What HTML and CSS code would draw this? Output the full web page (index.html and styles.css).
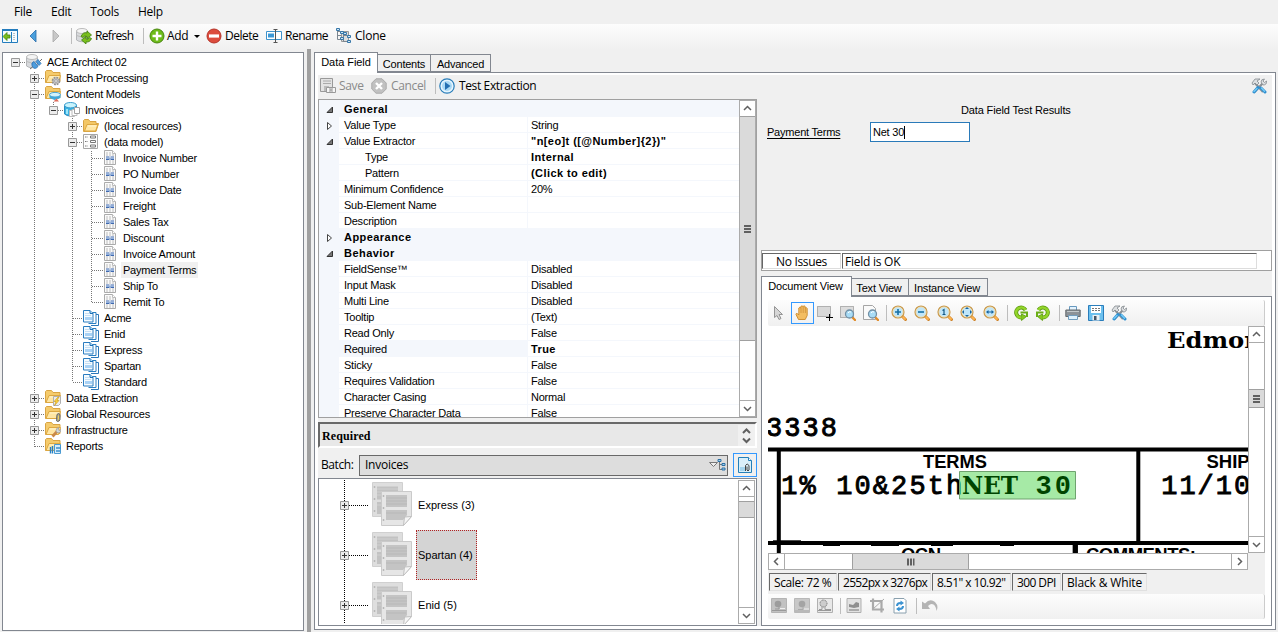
FILE: index.html
```html
<!DOCTYPE html>
<html lang="en">
<head>
<meta charset="utf-8">
<title>ACE Architect</title>
<link rel="stylesheet" href="styles.css">
</head>
<body>
<svg class="sprite" aria-hidden="true">
  <symbol id="plus" viewBox="0 0 9 9"><path d="M.5.5h8v8h-8z" fill="#ececec" stroke="#999"/><path d="M2 4.500h5M4.500 2v5" stroke="#333"/></symbol>
  <symbol id="minus" viewBox="0 0 9 9"><path d="M.5.5h8v8h-8z" fill="#ececec" stroke="#999"/><path d="M2 4.500h5" stroke="#333"/></symbol>
  <symbol id="folder" viewBox="0 0 16 16"><path d="M.5 13.500v-11l1-1h4l1.500 2h6v2h2.500l-2.500 8z" fill="#f3c766" stroke="#d9a443"/><path d="M1.500 13l2.500-6.500h11l-2.500 6.500z" fill="#ffe6a3" stroke="#dda841"/><path d="M5 8h8" stroke="#fff4cf"/></symbol>
  <symbol id="fback" viewBox="0 0 16 16"><path d="M.5 12.500v-11l1-1h5l1.500 2h7v9z" fill="#f5cb6c" stroke="#d9a443"/><path d="M1 12.500l3-7h11.500l-2 7z" fill="#ffe6a3" stroke="#dda841"/><path d="M5 7h9" stroke="#fff4cf"/></symbol>
  <symbol id="fgear" viewBox="0 0 16 16"><use href="#fback"/><circle cx="11" cy="11" r="3.200" fill="#c9c9c9" stroke="#8f8f8f" stroke-width="2.200" stroke-dasharray="1.700 .8"/><circle cx="11" cy="11" r="2.700" fill="#c4c4c4"/><circle cx="11" cy="11" r="1.300" fill="#fff" stroke="#888" stroke-width=".7"/></symbol>
  <symbol id="fcyl" viewBox="0 0 16 16"><use href="#fback"/><path d="M4.500 9v3l5 2 6-2V9z" fill="#3fa9dc"/><ellipse cx="10" cy="8.700" rx="5.500" ry="2.300" fill="#d3f2fc" stroke="#4aa5d4"/><path d="M8.500 15.500l3-3 2.500 3z" fill="#df6b5b"/></symbol>
  <symbol id="fbolt" viewBox="0 0 16 16"><use href="#fback"/><path d="M8.500 6.500h7v7l-2 2h-5z" fill="#ececec" stroke="#b0b0b0"/><path d="M13 7l-4 4.500h2l-1.500 4 4.500-5h-2l2-3.500z" fill="#ffd83b" stroke="#c99517" stroke-width=".6"/></symbol>
  <symbol id="fclip" viewBox="0 0 16 16"><use href="#fback"/><path d="M12 8.500q1.500-2 3 0v5q-.3 2-2.500 2-1.500-.5-1-2z" fill="#a8a38c" stroke="#666"/><path d="M13.400 9.500v4" stroke="#f7d65d"/></symbol>
  <symbol id="fwrench" viewBox="0 0 16 16"><use href="#fback"/><path d="M7.500 14.500l4.500-5" stroke="#c9894a" stroke-width="2.800"/><path d="M11 9q0-3.500 3-3.500l-1 2 1.500 1 1.500-1q0 4-4 3z" fill="#d4d8da" stroke="#999" stroke-width=".7"/></symbol>
  <symbol id="freport" viewBox="0 0 16 16"><use href="#fback"/><path d="M9.500 6.500h6v9h-6z" fill="#d6ecfa" stroke="#4a9ad2"/><path d="M5.500 9v6.500M7.500 8v7.500" stroke="#2780c3" stroke-width="1.400"/><path d="M11 10h5M11 13h4" stroke="#3c8fcb" stroke-width="1.300"/></symbol>
  <symbol id="db" viewBox="0 0 16 16"><path d="M.5 3v9q5 3.500 11 0V3z" fill="#d8dadd" stroke="#b4b6b9"/><ellipse cx="6" cy="3" rx="5.500" ry="2.500" fill="#f4f4f4" stroke="#bcbcbc"/><path d="M.5 7.500q5 3 11 0" fill="none" stroke="#bbb"/></symbol>
  <symbol id="dblink" viewBox="0 0 16 16"><use href="#db"/><path d="M6 11.500q-1-3 2-4l4 5q-3 3.500-5.500.5zM10 7.500l2-2 3 4-2 2z" fill="#4e9ddd" stroke="#2a70b4" stroke-width=".8"/><path d="M4 15l2.500-2M14 7l2-2" stroke="#6c6c6c"/></symbol>
  <symbol id="dbblue" viewBox="0 0 16 16"><path d="M.5 3v9q5 4 12 0V3z" fill="#3ab2e2" stroke="#2a8bc0"/><ellipse cx="6.500" cy="3.200" rx="6" ry="2.700" fill="#c8f3fc" stroke="#3a9dce"/><path d="M3 7v5" stroke="#9be6fa" stroke-width="2"/><path d="M5.500 8.500h5v6h-5z" fill="#fff" stroke="#bbb"/><path d="M8 7.500h5v6h-5z" fill="#fff" stroke="#bbb"/><path d="M10.500 5.500h5v6h-5z" fill="#fff" stroke="#a2a2a2"/></symbol>
  <symbol id="model" viewBox="0 0 16 16"><path d="M.5.5h14v14H.5z" fill="#fdfdfd" stroke="#a6a6a6"/><path d="M2 3h3M2 7.500h3M2 12h3" stroke="#777" stroke-dasharray="1 .5"/><path d="M7.500 2h5v2h-5zM7.500 6.500h5v2h-5zM7.500 11h5v2h-5z" fill="#fff" stroke="#777"/></symbol>
  <symbol id="field" viewBox="0 0 16 16"><path d="M2.500.5h8l3 3v11h-11z" fill="#fafafa" stroke="#ababab"/><path d="M10.500.5v3h3" fill="#fff" stroke="#bbb"/><path d="M4 3h5M4 5h8M4 11h8M4 13h8" stroke="#bcbcbc" stroke-dasharray="2 1"/><path d="M4 7h8M4 9.500h8" stroke="#3f69b0" stroke-dasharray="3.500 1"/><path d="M4 8.300h8" stroke="#7b9fd4"/></symbol>
  <symbol id="pages" viewBox="0 0 16 16"><path d="M10 4.500h5.500v11H8" fill="#fff" stroke="#2a76b8"/><path d="M8 2.500h5v11H5.500" fill="#fff" stroke="#2a7fc2"/><path d="M.5.500h6.500l3 3v8.500H.5z" fill="#f5fbff" stroke="#2a7cc0"/><path d="M7 .5v3h3" fill="#b6dcf5" stroke="#1b70b8"/><path d="M2 3.500h4M2 5.500h6" stroke="#c5def3"/><path d="M2 8.500h7" stroke="#a9d2f5" stroke-width="3"/></symbol>
  <symbol id="tools" viewBox="0 0 16 16"><path d="M3 4l9 10" stroke="#8b9196" stroke-width="2.200"/><path d="M12 5L3.500 14" stroke="#8b9196" stroke-width="2.200"/><path d="M1 5l3-4h5L6 3l2 2-2 2-2-2-2 2zM10 4q0-3 3.500-3L12 3l1.500 1.500L15.500 3q.5 4-3.500 4z" fill="#dcdfe1" stroke="#83898e" stroke-width=".8"/><path d="M7 9.500L3 14M10 10l4 4" stroke="#2f8fd0" stroke-width="3" stroke-linecap="round"/><path d="M6 10.500l-3 3M10.500 10l3 3.300" stroke="#77cdf7" stroke-width="1.300" stroke-linecap="round"/></symbol>
  <symbol id="mag" viewBox="0 0 16 16"><path d="M11 11l3.500 3.500" stroke="#cf842b" stroke-width="3" stroke-linecap="round"/><path d="M12 12l2 2" stroke="#ffb44e" stroke-width="1.800" stroke-linecap="round"/><circle cx="7" cy="7" r="5.900" fill="#d5f0fd" stroke="#c99a4e" stroke-width="1.400"/><circle cx="7" cy="7" r="5" fill="#bfe6fa" stroke="#f2dba8" stroke-width=".8"/></symbol>
  <symbol id="smag" viewBox="0 0 16 16"><path d="M12 12l3 3" stroke="#e08b29" stroke-width="2.400" stroke-linecap="round"/><circle cx="9.500" cy="9" r="4" fill="#a8dcf6" stroke="#728fa4" stroke-width="1.300"/><path d="M8 8q1-2 3-1" fill="none" stroke="#fff"/></symbol>
  <symbol id="rot" viewBox="0 0 16 16"><path d="M12.500 5A5 5 0 1 0 8.500 12.500" fill="none" stroke="#5c9a10" stroke-width="4"/><path d="M8.500 9v6.500l5-4z" fill="#83c81d" stroke="#5c9a10" stroke-width=".8"/><path d="M12.500 5A5 5 0 1 0 8.500 12.500" fill="none" stroke="#93d52b" stroke-width="2.400"/><path d="M7.500 7.500h6.500v4.500" fill="none" stroke="#6cae17" stroke-width="2"/></symbol>
  <symbol id="clone" viewBox="0 0 16 16"><path d="M5.500 3.500h7v10h-7z" fill="#ddd" stroke="#999"/><path d="M1.500 1v10.500H5M1.500 3.500H5M1.500 7.500H5M7.500 5v8.500h4M7.500 7.500h4" fill="none" stroke="#7c8790"/><path d="M.5.500h3v2h-3zM4.500 3.500h3v2h-3zM4.500 9.500h3v2h-3zM7.500 4.500h3v2h-3zM11.500 7.500h3v2h-3zM11.500 12.500h3v2h-3z" fill="#cfe7f7" stroke="#3777a8"/></symbol>
  <symbol id="stack" viewBox="0 0 40 44"><path d="M.5.500h30v34H.5z" fill="#dedede" stroke="#d0d0d0"/><path d="M5 4.500h21v13H5zM5 20h21v12H5z" fill="#c2c2c2"/><path d="M5 7h21M5 10h21M5 13h21M5 23h21" stroke="#d0d0d0"/><path d="M9.500 9.500h30v25l-8 9h-22z" fill="#e6e6e6" stroke="#cacaca"/><path d="M14 13h21v12H14zM14 28h21v5l-4 5H14z" fill="#c4c4c4"/><path d="M14 16h21M14 19h21M14 22h21M14 31h20" stroke="#b8b8b8"/><path d="M31.500 43.500l1-8.500 7-.5z" fill="#f5f5f5" stroke="#c0c0c0"/><path d="M2.500 4v2M2.500 16v2M2.500 28v2M11.500 13v2M11.500 25v2M11.500 37v2" stroke="#b8b8b8" stroke-width="1.500"/></symbol>
  <symbol id="up" viewBox="0 0 15 15"><path d="M4 9l3.500-3.500L11 9" fill="none" stroke="#606060" stroke-width="1.500"/></symbol>
  <symbol id="down" viewBox="0 0 15 15"><path d="M4 6l3.500 3.500L11 6" fill="none" stroke="#606060" stroke-width="1.500"/></symbol>
  <symbol id="open" viewBox="0 0 8 8"><path d="M6.500 1v5.500H1z" fill="#777" stroke="#333"/></symbol>
  <symbol id="closed" viewBox="0 0 8 8"><path d="M1.500.5v7l4-3.500z" fill="#fff" stroke="#444"/></symbol>
</svg>

<nav class="menubar"><span>File</span><span>Edit</span><span>Tools</span><span>Help</span></nav>
<div class="toolbar">
  <svg class="i nav" viewBox="0 0 16 16"><path d="M.5 1.500h15v13H.5z" fill="#f3fbff" stroke="#237cbd"/><path d="M0 2h16" stroke="#237cbd" stroke-width="2"/><path d="M9.500 4v10" stroke="#237cbd"/><path d="M12 5v8" stroke="#888" stroke-dasharray="1 1"/><path d="M1 8.500l4-4v2.500h3v3H5v2.500z" fill="#77bd1d" stroke="#45850b" stroke-width=".8"/></svg>
  <svg class="i back" viewBox="0 0 16 16"><path d="M11 2v12L5 8z" fill="#4ba0dd" stroke="#296ca8" stroke-width=".8"/></svg>
  <svg class="i fwd" viewBox="0 0 16 16"><path d="M5 2v12l6-6z" fill="#c8c8c8" stroke="#a8a8a8" stroke-width=".8"/></svg>
  <i class="sep s1"></i>
  <svg class="i ref" viewBox="0 0 16 16"><use href="#db"/><path d="M5 8.500q2-5 6-3.500V3l4.500 4L11 10.500V8.500Q8.500 7 7 9.500zM15.500 10.500q-1.500 4-5.500 3.500V16l-4.500-4L10 8.500v2.500q2 1 3.500-1.500z" fill="#79bf1d" stroke="#3f7c0b" stroke-width=".8"/></svg>
  <span class="t-refresh">Refresh</span>
  <i class="sep s2"></i>
  <svg class="i add" viewBox="0 0 16 16"><circle cx="8" cy="8" r="7" fill="#6dbb19" stroke="#48860f"/><path d="M8 3.500v9M3.500 8h9" stroke="#fff" stroke-width="2.400"/></svg>
  <span class="t-add">Add</span><i class="drop"></i>
  <svg class="i del" viewBox="0 0 16 16"><circle cx="8" cy="8" r="7" fill="#dc4c3d" stroke="#b53328"/><path d="M3 8h10" stroke="#fff" stroke-width="3.200"/></svg>
  <span class="t-delete">Delete</span>
  <svg class="i ren" viewBox="0 0 16 16"><path d="M.5 3.500h15v8H.5z" fill="#fff" stroke="#3f93cc"/><path d="M2 5.500h6v4H2z" fill="#3c98d6"/><path d="M7.500 1.500h4M7.500 14.500h4M9.500 1.500v13" stroke="#555"/></svg>
  <span class="t-rename">Rename</span>
  <svg class="i cln"><use href="#clone"/></svg>
  <span class="t-clone">Clone</span>
</div>

<main class="work">
  <section class="tree">
    <svg class="lines" viewBox="0 0 200 400"><path d="M12.500 9.500h10M31.500 19v375M31.500 25.500h11M31.500 41.500h11M50.500 49v9M50.500 57.500h11M69.500 65v264M69.500 73.500h11M69.500 89.500h11M88.500 98v152M88.500 105.500h11M88.500 121.500h11M88.500 137.500h11M88.500 153.500h11M88.500 169.500h11M88.500 185.500h11M88.500 201.500h11M88.500 217.500h11M88.500 233.500h11M88.500 249.500h11M69.500 265.500h11M69.500 281.500h11M69.500 297.500h11M69.500 313.500h11M69.500 329.500h11M31.500 345.500h11M31.500 361.500h11M31.500 377.500h11M31.500 393.500h11"/></svg>
    <div class="node l0"><svg class="x"><use href="#minus"/></svg><svg class="i"><use href="#dblink"/></svg><span>ACE Architect 02</span></div>
    <div class="node l1"><svg class="x"><use href="#plus"/></svg><svg class="i"><use href="#fgear"/></svg><span>Batch Processing</span></div>
    <div class="node l1"><svg class="x"><use href="#minus"/></svg><svg class="i"><use href="#fcyl"/></svg><span>Content Models</span></div>
    <div class="node l2"><svg class="x"><use href="#minus"/></svg><svg class="i"><use href="#dbblue"/></svg><span>Invoices</span></div>
    <div class="node l3"><svg class="x"><use href="#plus"/></svg><svg class="i"><use href="#folder"/></svg><span>(local resources)</span></div>
    <div class="node l3"><svg class="x"><use href="#minus"/></svg><svg class="i"><use href="#model"/></svg><span>(data model)</span></div>
    <div class="node l4"><i class="x"></i><svg class="i"><use href="#field"/></svg><span>Invoice Number</span></div>
    <div class="node l4"><i class="x"></i><svg class="i"><use href="#field"/></svg><span>PO Number</span></div>
    <div class="node l4"><i class="x"></i><svg class="i"><use href="#field"/></svg><span>Invoice Date</span></div>
    <div class="node l4"><i class="x"></i><svg class="i"><use href="#field"/></svg><span>Freight</span></div>
    <div class="node l4"><i class="x"></i><svg class="i"><use href="#field"/></svg><span>Sales Tax</span></div>
    <div class="node l4"><i class="x"></i><svg class="i"><use href="#field"/></svg><span>Discount</span></div>
    <div class="node l4"><i class="x"></i><svg class="i"><use href="#field"/></svg><span>Invoice Amount</span></div>
    <div class="node l4"><i class="x"></i><svg class="i"><use href="#field"/></svg><span class="sel">Payment Terms</span></div>
    <div class="node l4"><i class="x"></i><svg class="i"><use href="#field"/></svg><span>Ship To</span></div>
    <div class="node l4"><i class="x"></i><svg class="i"><use href="#field"/></svg><span>Remit To</span></div>
    <div class="node l3"><i class="x"></i><svg class="i"><use href="#pages"/></svg><span>Acme</span></div>
    <div class="node l3"><i class="x"></i><svg class="i"><use href="#pages"/></svg><span>Enid</span></div>
    <div class="node l3"><i class="x"></i><svg class="i"><use href="#pages"/></svg><span>Express</span></div>
    <div class="node l3"><i class="x"></i><svg class="i"><use href="#pages"/></svg><span>Spartan</span></div>
    <div class="node l3"><i class="x"></i><svg class="i"><use href="#pages"/></svg><span>Standard</span></div>
    <div class="node l1"><svg class="x"><use href="#plus"/></svg><svg class="i"><use href="#fbolt"/></svg><span>Data Extraction</span></div>
    <div class="node l1"><svg class="x"><use href="#plus"/></svg><svg class="i"><use href="#fclip"/></svg><span>Global Resources</span></div>
    <div class="node l1"><svg class="x"><use href="#plus"/></svg><svg class="i"><use href="#fwrench"/></svg><span>Infrastructure</span></div>
    <div class="node l1"><i class="x"></i><svg class="i"><use href="#freport"/></svg><span>Reports</span></div>
  </section>
  <div class="splitter"></div>

  <section class="editor">
    <div class="tabs top"><span class="tab on a1">Data Field</span><span class="tab a2">Contents</span><span class="tab a3">Advanced</span></div>
    <div class="page">
      <div class="left">
        <div class="cmdbar">
          <svg class="i" viewBox="0 0 16 16"><path d="M.5.500h12v13H.5z" fill="#e3e3e3" stroke="#999"/><path d="M3 3h8M3 5.500h8" stroke="#aaa"/><path d="M4 8h5v5H4z" fill="#bbb"/><path d="M6.500 9.500h9v5h-9z" fill="#f5f5f5" stroke="#999"/><path d="M9 11h4M9 13h4M11 11v2" stroke="#999"/></svg>
          <span class="off c1">Save</span>
          <svg class="i c2" viewBox="0 0 16 16"><path d="M5 .8h6L15.200 5v6L11 15.200H5L.8 11V5z" fill="#c1c1c1" stroke="#aaa"/><path d="M5 5l6 6M11 5l-6 6" stroke="#fff" stroke-width="2.400"/></svg>
          <span class="off c3">Cancel</span>
          <i class="sep"></i>
          <svg class="i c4" viewBox="0 0 16 16"><circle cx="8" cy="8" r="7.200" fill="#e6f5fe" stroke="#287db9" stroke-width="1.200"/><circle cx="8" cy="8" r="5" fill="#abdaf5"/><path d="M6 4l5.500 4L6 12z" fill="#2470b2"/></svg>
          <span class="c5">Test Extraction</span>
        </div>
        <div class="grid">
          <div class="rows">
            <div class="row cat"><b class="g"><svg><use href="#open"/></svg></b><b>General</b></div>
            <div class="row"><b class="g"><svg><use href="#closed"/></svg></b><span class="n">Value Type</span><span class="v">String</span></div>
            <div class="row"><b class="g"><svg><use href="#open"/></svg></b><span class="n">Value Extractor</span><span class="v"><b>"n[eo]t ([@Number]{2})"</b></span></div>
            <div class="row"><b class="g"></b><span class="n sub">Type</span><span class="v"><b>Internal</b></span></div>
            <div class="row"><b class="g"></b><span class="n sub">Pattern</span><span class="v"><b>(Click to edit)</b></span></div>
            <div class="row"><b class="g"></b><span class="n">Minimum Confidence</span><span class="v">20%</span></div>
            <div class="row"><b class="g"></b><span class="n">Sub-Element Name</span><span class="v"></span></div>
            <div class="row"><b class="g"></b><span class="n">Description</span><span class="v"></span></div>
            <div class="row cat"><b class="g"><svg><use href="#closed"/></svg></b><b>Appearance</b></div>
            <div class="row cat"><b class="g"><svg><use href="#open"/></svg></b><b>Behavior</b></div>
            <div class="row"><b class="g"></b><span class="n">FieldSense™</span><span class="v">Disabled</span></div>
            <div class="row"><b class="g"></b><span class="n">Input Mask</span><span class="v">Disabled</span></div>
            <div class="row"><b class="g"></b><span class="n">Multi Line</span><span class="v">Disabled</span></div>
            <div class="row"><b class="g"></b><span class="n">Tooltip</span><span class="v">(Text)</span></div>
            <div class="row"><b class="g"></b><span class="n">Read Only</span><span class="v">False</span></div>
            <div class="row"><b class="g"></b><span class="n hot">Required</span><span class="v"><b>True</b></span></div>
            <div class="row"><b class="g"></b><span class="n">Sticky</span><span class="v">False</span></div>
            <div class="row"><b class="g"></b><span class="n">Requires Validation</span><span class="v">False</span></div>
            <div class="row"><b class="g"></b><span class="n">Character Casing</span><span class="v">Normal</span></div>
            <div class="row"><b class="g"></b><span class="n">Preserve Character Data</span><span class="v">False</span></div>
          </div>
          <div class="vbar"><svg class="btn"><use href="#up"/></svg><div class="thumb t1"><i class="grip"></i></div><div class="room"></div><svg class="btn"><use href="#down"/></svg></div>
        </div>
        <div class="help"><b>Required</b><svg viewBox="0 0 17 21"><path d="M5 8l3.500-3.500L12 8M5 13.500L8.500 17l3.500-3.500" fill="none" stroke="#606060" stroke-width="2"/></svg></div>
        <div class="batch"><span>Batch:</span>
          <div class="combo"><span>Invoices</span><svg viewBox="0 0 18 12"><path d="M1.500 3.500h8l-4 4z" fill="#eee" stroke="#777"/><path d="M11.500 2v8.500h3M11.500 5.500h3" fill="none" stroke="#777"/><path d="M10 .5h3v2h-3zM14 4.500h3v2h-3zM14 9h3v2h-3z" fill="#9fd0f0" stroke="#2d70a5"/></svg></div>
          <div class="bbtn"><svg viewBox="0 0 16 16"><path d="M1.500.5h10l3 3v12h-13z" fill="#d9effa" stroke="#247fb8"/><path d="M11.500.5v3h3" fill="#fff" stroke="#247fb8"/><path d="M3 12h6" stroke="#a4d5ef" stroke-width="4"/><path d="M8.500 14V8.500q1.500-3 3.500 0V13q-1 2-2 0V9.500" fill="none" stroke="#444"/></svg></div>
        </div>
        <div class="folders">
          <div class="list">
            <svg class="lines2" viewBox="0 0 60 146"><path d="M25.500 1v144M30 26.500h19M30 76.500h19M30 126.500h19"/></svg>
            <div class="item"><svg class="x"><use href="#plus"/></svg><svg class="stk"><use href="#stack"/></svg><span>Express (3)</span></div>
            <div class="item"><svg class="x"><use href="#plus"/></svg><svg class="stk"><use href="#stack"/></svg><span class="picked">Spartan (4)</span></div>
            <div class="item"><svg class="x"><use href="#plus"/></svg><svg class="stk"><use href="#stack"/></svg><span>Enid (5)</span></div>
          </div>
          <div class="vbar"><svg class="btn"><use href="#up"/></svg><div class="room t0"></div><div class="thumb t2"></div><div class="room"></div><svg class="btn"><use href="#down"/></svg></div>
        </div>
      </div>

      <div class="right">
        <div class="test">
          <svg class="i cfg"><use href="#tools"/></svg>
          <div class="ttl">Data Field Test Results</div>
          <div class="frow"><u>Payment Terms</u><div class="inp">Net 30<i></i></div></div>
        </div>
        <div class="issues"><span class="is1">No Issues</span><span class="is2">Field is OK</span></div>
        <div class="tabs low"><span class="tab on b1">Document View</span><span class="tab b2">Text View</span><span class="tab b3">Instance View</span></div>
        <div class="viewer">
          <div class="vtools">
            <svg class="i k1" viewBox="0 0 16 16"><path d="M4.500 1.500v11l2.500-2 2 4 2-1-2-4h3.500z" fill="#d6d6d6" stroke="#959595"/></svg>
            <div class="hand"><svg class="i" viewBox="0 0 16 16"><path d="M3.500 14.500L1 9.500q0-1.500 1.300-1l1.500 1.500V3q1-1.500 2 0V1.500q1.200-1.300 2.200 0v0q1.200-1.300 2.200 0V3q1.500-1 2 .5v7l-2 4z" fill="#f3bd61" stroke="#c98829" stroke-width=".9"/><path d="M6 3v5M8.200 2v6M10.400 3v5" stroke="#ce9138" stroke-width=".8"/></svg></div>
            <svg class="i k2" viewBox="0 0 16 16"><path d="M.5 1.500h13v10H.5z" fill="#d9d9d9" stroke="#777" stroke-dasharray="1 1"/><path d="M9 12.500h7M12.500 9v7" stroke="#000"/></svg>
            <svg class="i k3" viewBox="0 0 16 16"><path d="M.5 1.500h13v11H.5z" fill="#ddd" stroke="#777" stroke-dasharray="1 1"/><use href="#smag"/></svg>
            <svg class="i k3" viewBox="0 0 16 16"><path d="M.5.500h9l3 3v11H.5z" fill="#fafafa" stroke="#a5a5a5"/><use href="#smag"/></svg>
            <i class="sep"></i>
            <svg class="i k4" viewBox="0 0 16 16"><use href="#mag"/><path d="M4 7h6M7 4v6" stroke="#1770a5" stroke-width="1.600"/></svg>
            <svg class="i k5" viewBox="0 0 16 16"><use href="#mag"/><path d="M4 7h6" stroke="#1770a5" stroke-width="1.600"/></svg>
            <svg class="i k5" viewBox="0 0 16 16"><use href="#mag"/><path d="M5.500 5.500L7 4.500v5M5.500 9.500h3" fill="none" stroke="#155a87" stroke-width="1.200"/></svg>
            <svg class="i k5" viewBox="0 0 16 16"><use href="#mag"/><path d="M7 2l2 2H5zM7 12l2-2H5zM2 7l2-2v4zM12 7l-2-2v4z" fill="#1765a0"/></svg>
            <svg class="i k5" viewBox="0 0 16 16"><use href="#mag"/><path d="M3 7l2.500-2v4zM11 7L8.500 5v4z" fill="#1765a0"/><path d="M4 7h6" stroke="#1765a0"/></svg>
            <i class="sep s6"></i>
            <svg class="i k6"><use href="#rot"/></svg>
            <svg class="i k7 flip"><use href="#rot"/></svg>
            <i class="sep s6"></i>
            <svg class="i k8" viewBox="0 0 16 16"><path d="M4.500 1.500h7v4h-7z" fill="#e4f3fe" stroke="#6798be"/><path d="M.8 5h14.400v6.500H.8z" fill="#8c9298" stroke="#666c70"/><path d="M2 6.500h12" stroke="#c1c7ca"/><path d="M3.500 10.500h9v4h-9z" fill="#dff1fd" stroke="#709cbd"/></svg>
            <svg class="i k5" viewBox="0 0 16 16"><path d="M.5.500h15v15H.5z" fill="#6cc0ee" stroke="#2a7dbb"/><path d="M3 1h10v7H3z" fill="#fff"/><path d="M4 3.500h8M4 5.500h8" stroke="#777" stroke-dasharray="2 1"/><path d="M4.500 10h7v5.500h-7z" fill="#ecf0f2"/><path d="M6 11h2.500v4H6z" fill="#456"/></svg>
            <svg class="i k5"><use href="#tools"/></svg>
          </div>
          <div class="view">
            <svg class="doc" viewBox="768 326 480 227">
              <path d="M768 449.500h480M768 543h480M778.800 448v106M1138.300 448v97" fill="none" stroke="#000" stroke-width="4"/>
              <path d="M1075.300 544v9" stroke="#000" stroke-width="5.300"/>
              <path d="M773 540.800h28M823 545.500h17M871 545.500h28M931 545.500h22M1000 545.500h14" stroke="#000"/>
              <g class="mono"><text x="766" y="436" textLength="71">3338</text><text x="781.200" y="494" textLength="181">1% 10&amp;25th</text><text class="hv" x="1035.500" y="494" textLength="35.500">30</text><text x="1161.200" y="494" textLength="89">11/10</text></g>
              <g class="slab"><text x="1167" y="348" textLength="90" lengthAdjust="spacingAndGlyphs">Edmor</text><text class="big" x="962" y="494" textLength="56" lengthAdjust="spacingAndGlyphs">NET</text></g>
              <g class="head"><text x="923" y="468" textLength="64" lengthAdjust="spacingAndGlyphs">TERMS</text><text x="1206.500" y="468">SHIP</text><text x="901" y="561" textLength="40">OCN</text><text x="1086" y="561" textLength="110">COMMENTS:</text></g>
              <path d="M959.500 471.500h116v27.500h-116z" fill="#00c400" fill-opacity=".35" stroke="#6fa36f"/>
            </svg>
            <div class="vbar"><svg class="btn"><use href="#up"/></svg><div class="room t3"></div><div class="thumb t4"><i class="grip"></i></div><div class="room"></div><svg class="btn"><use href="#down"/></svg></div>
          </div>
          <div class="hwrap"><div class="hbar"><svg class="btn rl"><use href="#up"/></svg><div class="room h1"></div><div class="thumb h2"><i class="grip"></i></div><div class="room"></div><svg class="btn rr"><use href="#up"/></svg></div></div>
          <div class="stat"><span class="z1">Scale: 72 %</span><span class="z2">2552px x 3276px</span><span class="z3">8.51" x 10.92"</span><span class="z4">300 DPI</span><span class="z5">Black &amp; White</span></div>
          <div class="vtools bot">
            <svg class="i q1" viewBox="0 0 16 16"><path d="M.5.500h15v14H.5z" fill="#c2c2c2" stroke="#b4b4b4"/><circle cx="7" cy="6" r="3.300" fill="#9c9c9c"/><path d="M4 11h4v-2M1 12.500h14" stroke="#999" fill="none"/><path d="M9 10.500h5" stroke="#f0f0f0"/></svg>
            <svg class="i q2" viewBox="0 0 16 16"><path d="M.5.500h15v14H.5z" fill="#c8c8c8" stroke="#b8b8b8"/><circle cx="8" cy="6" r="3.300" fill="#a4a4a4"/><path d="M4 11.500h5v-3M1 13h14" stroke="#aaa" fill="none"/><path d="M10 11h5" stroke="#f0f0f0"/></svg>
            <svg class="i q2" viewBox="0 0 16 16"><path d="M.5.500h15v14H.5z" fill="#e8e8e8" stroke="#b0b0b0"/><circle cx="6.500" cy="5.500" r="3.500" fill="#ccc" stroke="#777" stroke-dasharray="1 .6"/><path d="M5 8.500v3H2M8 8.500v3h6M1 12.500h13" stroke="#999" fill="none"/></svg>
            <i class="sep"></i>
            <svg class="i q3" viewBox="0 0 16 16"><path d="M1 .5h14v14H1z" fill="#e2e2e2" stroke="#b0b0b0"/><path d="M3 6l4 1 3-3 3 1v4L8 10 3 9z" fill="#8f8f8f"/><path d="M3 12h10" stroke="#999" stroke-width="1.500"/></svg>
            <svg class="i q2" viewBox="0 0 16 16"><path d="M4 .5v11h11M1 3h11.500v11.500" fill="none" stroke="#aaa" stroke-width="2.200"/><path d="M4 11L15 1" stroke="#aaa"/></svg>
            <svg class="i q2" viewBox="0 0 16 16"><path d="M2 .5h10l2 2v12.500H2z" fill="#fff" stroke="#8aa0ae"/><path d="M4 8q0-4 4.500-4V2.500L12 5 8.500 7.500V6Q6 6 6 8zM12 8q0 4-4.500 4v1.500L4 11l3.500-2.500V10Q10 10 10 8z" fill="#3b93d2"/></svg>
            <i class="sep q4"></i>
            <svg class="i q5" viewBox="0 0 16 16"><path d="M0 3.500L3 5.500Q8 0 13 4q4 4 1.500 9-.5-5-3-6.500T6 8l2 3H0z" fill="#b4b4b4"/></svg>
          </div>
        </div>
      </div>
    </div>
  </section>
</main>
</body>
</html>
```
FILE: styles.css
```css
* { box-sizing: border-box; }
body { margin: 0; width: 1278px; height: 632px; overflow: hidden; background: #f0f0f0; color: #000; display: flex; flex-direction: column; font: 11px/16px "Liberation Sans", Arial, sans-serif; letter-spacing: -.22px; }
svg { display: block; flex: none; }
span, u { white-space: pre; }
.sprite { position: absolute; width: 0; height: 0; }
.i { width: 16px; height: 16px; }
.sep { width: 1px; height: 16px; background: #bdbdbd; flex: none; }

.menubar, .toolbar, .cmdbar, .issues, .batch, .stat { font: 12px/16px "Open Sans", "Noto Sans", sans-serif; letter-spacing: -.35px; }
.menubar { height: 24px; flex: none; display: flex; align-items: center; gap: 19px; padding-left: 14px; letter-spacing: -.25px; }
.toolbar { height: 25px; flex: none; display: flex; align-items: center; padding: 0 0 1px 2px; background: linear-gradient(#fdfdfd, #f0f0f0); }
.back { margin-left: 7px; }
.fwd { margin-left: 7px; }
.s1 { margin: 0 4px 0 7px; }
.t-refresh { margin-left: 3px; width: 45px; letter-spacing: -.65px; }
.s2 { margin: 0 5px 0 3px; }
.t-add { margin-left: 2px; width: 27px; }
.drop { border: 3px solid transparent; border-top-color: #000; border-bottom: 0; }
.del { margin-left: 6px; }
.t-delete { margin-left: 3px; width: 38px; letter-spacing: -.5px; }
.ren { margin-left: 3px; }
.t-rename { margin-left: 3px; width: 48px; letter-spacing: -.5px; }
.cln { margin-left: 3px; }
.t-clone { margin-left: 3px; letter-spacing: -.2px; }

.work { flex: 1; display: flex; min-height: 0; }
.tree { position: relative; width: 302px; margin: 3px 0 1px 2px; background: #fff; border: 1px solid #828790; padding-top: 1px; }
.lines { position: absolute; left: 0; top: 0; width: 200px; height: 400px; }
.lines path, .lines2 path { fill: none; stroke: #777; stroke-dasharray: 1 1; shape-rendering: crispEdges; }
.node { position: relative; height: 16px; display: flex; align-items: center; padding-left: 8px; }
.x { width: 9px; height: 9px; flex: none; }
.node .i { margin-left: 6px; }
.node span { margin-left: 3px; padding: 0 2px; }
.l1 { padding-left: 27px; } .l2 { padding-left: 46px; } .l3 { padding-left: 65px; } .l4 { padding-left: 84px; }
.sel { background: #f0f0f0; }
.splitter { width: 4px; margin-left: 3px; background: #a0a0a0; flex: none; }

.editor { flex: none; width: 962px; margin: 3px 0 0 3px; display: flex; flex-direction: column; }
.tabs { display: flex; align-items: flex-end; height: 21px; position: relative; margin-bottom: -1px; flex: none; }
.tab { height: 18px; border: 1px solid #828790; border-left-width: 0; text-align: center; line-height: 18px; margin-bottom: 1px; background: #f0f0f0; }
.tab.on { height: 21px; margin-bottom: 0; border-left-width: 1px; border-bottom: 0; background: #fff; }
.a1 { width: 64px; letter-spacing: -.05px; } .a2 { width: 53px; } .a3 { width: 60px; }
.page { height: 558px; border: 1px solid #828790; background: #fff; padding: 2px 3px 3px; display: flex; background-clip: padding-box; }
.left { width: 443px; background: #f0f0f0; padding-right: 4px; display: flex; flex-direction: column; }
.cmdbar { height: 24px; display: flex; align-items: center; padding: 0 0 2px 2px; }
.off { color: #8a8a8a; }
.c1 { margin-left: 3px; width: 30px; } .c2 { margin-left: 2px; } .c3 { margin-left: 4px; width: 37px; }
.cmdbar .sep { margin: 0 4px 0 7px; }
.c4 { margin-left: -1px; }
.c5 { margin-left: 4px; letter-spacing: -.37px; }
.grid { height: 319px; border: 1px solid #a0a0a0; background: #fff; display: flex; }
.rows { flex: 1; height: 317px; overflow: hidden; padding-top: 1px; background: #f4f7fc; }
.row { height: 16px; display: flex; line-height: 17px; }
.row > .g { width: 20px; flex: none; padding: 5px 0 0 7px; }
.row > .g svg { width: 8px; height: 8px; }
.row b { font-size: 11px; letter-spacing: .45px; padding-left: 5px; }
.row .v b { padding: 0; letter-spacing: .42px; }
.n { width: 189px; padding-left: 5px; background: #fff; border-bottom: 1px solid #f4f7fc; border-right: 1px solid #f4f7fc; }
.n.sub { padding-left: 26px; } .n.hot { background: #f4f7fc; }
.v { flex: 1; padding-left: 3px; background: #fff; border-bottom: 1px solid #f4f7fc; }
.vbar { width: 17px; display: flex; flex-direction: column; border: 1px solid #ababab; background: #fff; flex: none; }
.btn { width: 15px; height: 15px; }
.thumb { background: #dadada; display: flex; align-items: center; justify-content: center; border: solid #a0a0a0; border-width: 1px 0; flex: none; }
.room { flex: 1; }
.vbar > .btn:last-child { border-top: 1px solid #ababab; height: 16px; }
.grip { width: 7px; height: 8px; background: repeating-linear-gradient(#606060 0 2px, transparent 2px 3px); }
.t1 { height: 225px; }
.help { margin-top: 4px; height: 26px; border: 2px solid; border-color: #696969 #fff #fff #696969; background: #e8e8e8; display: flex; justify-content: space-between; align-items: center; padding-left: 2px; font: bold 12px "Liberation Serif", serif; letter-spacing: .1px; }
.help b { padding-top: 2px; }
.help svg { width: 17px; height: 21px; background: #f0f0f0; }
.batch { height: 24px; margin-top: 5px; display: flex; align-items: center; padding-left: 3px; letter-spacing: -.25px; }
.batch > span { width: 38px; letter-spacing: -.4px; }
.combo { width: 369px; height: 21px; background: #ddd; border: 1px solid #696969; display: flex; align-items: center; justify-content: space-between; padding: 0 1px 0 5px; }
.combo svg { width: 18px; height: 12px; }
.bbtn { width: 24px; height: 24px; margin-left: 5px; border: 1px solid #3399ff; display: flex; align-items: center; justify-content: center; }
.bbtn svg { width: 16px; height: 16px; }
.folders { margin-top: 1px; height: 148px; border: 1px solid #828790; background: #fff; display: flex; padding: 1px; }
.list { flex: 1; position: relative; overflow: hidden; letter-spacing: .05px; margin: -1px 0 0 -1px; }
.lines2 { position: absolute; left: 0; top: 0; width: 60px; height: 146px; }
.lines2 path { stroke: #000; }
.item { position: relative; height: 50px; display: flex; align-items: center; padding-left: 21px; top: 1px; }
.stk { width: 40px; height: 44px; margin: -3px 4px 0 23px; }
.item span { height: 50px; line-height: 50px; padding: 0 2px; width: 61px; }
.item .picked { background: #d4d4d4; border: 1px dotted #b02020; line-height: 48px; padding: 0 1px; letter-spacing: -.03px; }
.t0 { flex: none; height: 5px; border-top: 1px solid #ababab; } .t2 { height: 17px; }

.right { width: 511px; background: #f0f0f0; display: flex; flex-direction: column; }
.test { height: 175px; position: relative; padding-top: 27px; }
.cfg { position: absolute; right: 5px; top: 3px; }
.ttl { padding-left: 200px; letter-spacing: -.14px; }
.frow { display: flex; align-items: center; padding: 4px 0 0 6px; }
.frow u { width: 103px; text-underline-offset: 2px; }
.inp { width: 100px; height: 20px; background: #fff; border: 1px solid #2a7ab9; padding: 1px 2px; display: flex; align-items: center; }
.inp i { width: 1px; height: 13px; background: #000; }
.issues { height: 21px; background: #fff; border: 1px solid #a0a0a0; display: flex; padding: 2px 0 1px; }
.issues span { border: 1px solid #ddd; border-top-color: #666; border-left-color: #666; line-height: 16px; }
.is1 { width: 79px; text-align: center; letter-spacing: -.35px; } .is2 { width: 415px; margin-left: 1px; padding-left: 2px; letter-spacing: -.25px; }
.low { margin-top: 5px; }
.b1 { width: 91px; } .b2 { width: 57px; } .b3 { width: 79px; }
.low .tab { padding-right: 2px; letter-spacing: -.18px; }
.viewer { height: 330px; border: 1px solid #828790; background: #fff; padding: 3px 6px 0; }
.vtools { height: 26px; display: flex; align-items: center; background: linear-gradient(#fdfdfd, #f0f0f0); border-right: 1px solid #ccc; padding-left: 2px; border-radius: 2px; }
.hand { border: 1px solid #3399ff; width: 23px; height: 22px; margin-left: 5px; display: flex; align-items: center; justify-content: center; }
.k2 { margin-left: 3px; } .k3 { margin-left: 7px; } .k4 { margin-left: 4px; } .k5 { margin-left: 7px; }
.vtools .sep { margin-left: 7px; } .vtools .s6 { margin-left: 8px; }
.k6 { margin-left: 5px; } .k7 { margin-left: 6px; } .k8 { margin-left: 5px; }
.flip { transform: scaleX(-1); }
.view { height: 227px; display: flex; }
.doc { width: 480px; height: 227px; }
.mono { font: 27px "Liberation Mono", monospace; letter-spacing: 0; stroke: #000; stroke-width: .9px; }
.hv { font-weight: bold; stroke-width: 0; }
.slab { font: bold 22px "DejaVu Serif", serif; letter-spacing: 0; }
.big { font-size: 24.500px; }
.head { font: bold 18.500px "Liberation Sans", sans-serif; letter-spacing: 0; }
.t3 { flex: none; height: 47px; border-top: 1px solid #ababab; } .t4 { height: 19px; }
.hwrap { background: #f0f0f0; height: 17px; }
.hbar { width: 480px; height: 17px; border: 1px solid #ababab; background: #fff; display: flex; }
.hbar .thumb { width: 117px; height: 15px; border-width: 0 1px; }
.h1 { flex: none; width: 68px; border-left: 1px solid #ababab; }
.hbar .grip { transform: rotate(90deg); }
.rl { transform: rotate(-90deg); }
.rr { transform: rotate(90deg); box-shadow: 0 1px #ababab; }
.stat { height: 24px; background: #f0f0f0; display: flex; padding: 3px 0 0 1px; gap: 1px; }
.stat span { height: 18px; border: 1px solid #e0e0e0; border-top-color: #696969; border-left-color: #696969; padding-left: 4px; letter-spacing: -.5px; line-height: 17px; }
.stat .z1 { width: 68px; letter-spacing: -.4px; } .stat .z2 { width: 93px; letter-spacing: -.7px; } .stat .z3 { width: 79px; letter-spacing: -.57px; } .stat .z4 { width: 49px; letter-spacing: -.6px; } .stat .z5 { width: 85px; letter-spacing: -.15px; }
.bot { height: 25px; padding-bottom: 2px; }
.q1 { margin-left: 1px; } .q2 { margin-left: 7px; } .q3 { margin-left: 5px; }
.vtools .q4 { margin-left: 8px; } .q5 { margin-left: 5px; }
```
